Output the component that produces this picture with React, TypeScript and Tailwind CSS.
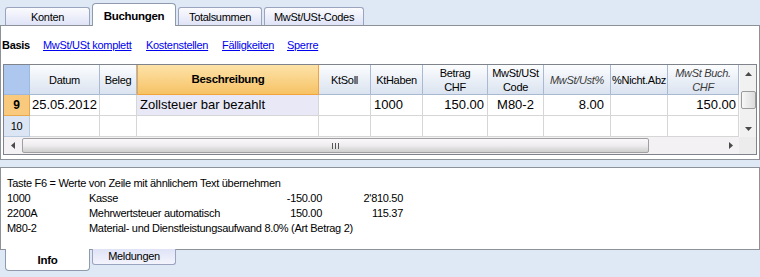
import React from "react";

const cols = [
  { key: "rh", w: 26 },
  { key: "Datum", w: 70 },
  { key: "Beleg", w: 37 },
  { key: "Beschreibung", w: 182 },
  { key: "KtSoll", w: 52 },
  { key: "KtHaben", w: 52 },
  { key: "Betrag", w: 65 },
  { key: "Code", w: 56 },
  { key: "Ust", w: 67 },
  { key: "Nicht", w: 57 },
  { key: "Buch", w: 71 },
];

function TopTab({ label, active, w }: { label: string; active?: boolean; w: number }) {
  if (active) {
    return (
      <div
        className="relative z-10 -mb-px h-[23px] bg-white border border-b-0 border-[#8f9aae] rounded-t-[4px] flex items-start justify-center pt-[4px] font-bold text-[11.5px]"
        style={{ width: w }}
      >
        {label}
      </div>
    );
  }
  return (
    <div
      className="h-[18px] border border-b-0 border-[#9aa4bf] rounded-t-[3px] bg-linear-to-b from-[#fbfbfe] to-[#dfe3f6] flex items-center justify-center pt-px"
      style={{ width: w }}
    >
      {label}
    </div>
  );
}

function UpArrow() {
  return (
    <svg width="7" height="4" viewBox="0 0 7 4">
      <path d="M3.5 0 L7 4 L0 4 Z" fill="#4a4a4a" />
    </svg>
  );
}
function DownArrow() {
  return (
    <svg width="7" height="4" viewBox="0 0 7 4">
      <path d="M0 0 L7 0 L3.5 4 Z" fill="#4a4a4a" />
    </svg>
  );
}
function LeftArrow() {
  return (
    <svg width="4" height="7" viewBox="0 0 4 7">
      <path d="M4 0 L4 7 L0 3.5 Z" fill="#4a4a4a" />
    </svg>
  );
}
function RightArrow() {
  return (
    <svg width="4" height="7" viewBox="0 0 4 7">
      <path d="M0 0 L4 3.5 L0 7 Z" fill="#4a4a4a" />
    </svg>
  );
}

const hdrCell =
  "h-[30px] shrink-0 border-r border-b border-[#a8bad2] bg-linear-to-b from-[#fcfdfe] to-[#dae3f0] flex items-center justify-center text-center leading-[14px] overflow-hidden whitespace-nowrap";
const bodyCell =
  "h-[21px] shrink-0 border-r border-b border-[#d6d6d6] flex items-center overflow-hidden whitespace-nowrap text-[13px] tracking-normal";

export default function App() {
  return (
    <div className="w-[760px] h-[277px] bg-[#dfe9f5] flex flex-col overflow-hidden text-black text-[11px] tracking-[-0.3px] font-['Liberation_Sans',Arial,sans-serif]">
      {/* top tabs */}
      <div className="h-[25px] flex items-end pl-[5px] gap-[2px] shrink-0">
        <TopTab label="Konten" w={85} />
        <TopTab label="Buchungen" w={84} active />
        <TopTab label="Totalsummen" w={84} />
        <TopTab label="MwSt/USt-Codes" w={100} />
      </div>

      {/* main panel */}
      <div className="h-[135px] shrink-0 bg-white border border-[#8d9299] flex flex-col">
        <div className="mt-[11px] h-[16px] flex items-center pl-[1px]">
          <span className="w-[41px] font-bold">Basis</span>
          <span className="w-[103px]"><span className="text-[#0000f0] underline">MwSt/USt komplett</span></span>
          <span className="w-[76px]"><span className="text-[#0000f0] underline">Kostenstellen</span></span>
          <span className="w-[65px]"><span className="text-[#0000f0] underline">Fälligkeiten</span></span>
          <span><span className="text-[#0000f0] underline">Sperre</span></span>
        </div>

        {/* grid */}
        <div className="mt-[11px] ml-[2px] w-[754px] h-[91px] border border-[#7f848c] flex flex-col">
          <div className="flex h-[72px]">
            <div className="w-[735px] flex flex-col">
              {/* header */}
              <div className="flex">
                <div className="w-[26px] h-[30px] shrink-0 border-r border-b border-[#9fb8dc] bg-[#adc7ee]" />
                <div className={hdrCell} style={{ width: 70 }}>Datum</div>
                <div className={hdrCell} style={{ width: 37 }}>Beleg</div>
                <div
                  className="h-[30px] shrink-0 border-x border-b border-[#f3a33c] bg-linear-to-b from-[#fde3a8] to-[#f6c264] flex items-center justify-center font-bold text-[11.5px]"
                  style={{ width: 182 }}
                >
                  Beschreibung
                </div>
                <div className={hdrCell} style={{ width: 52 }}>KtSoll</div>
                <div className={hdrCell} style={{ width: 52 }}>KtHaben</div>
                <div className={hdrCell} style={{ width: 65 }}>
                  Betrag<br />CHF
                </div>
                <div className={hdrCell} style={{ width: 56 }}>
                  MwSt/USt<br />Code
                </div>
                <div className={hdrCell + " italic text-[#3a3a3a]"} style={{ width: 67 }}>MwSt/Ust%</div>
                <div className={hdrCell} style={{ width: 57 }}>%Nicht.Abz</div>
                <div className={hdrCell + " italic text-[#3a3a3a]"} style={{ width: 71 }}>
                  MwSt Buch.<br />CHF
                </div>
              </div>
              {/* row 9 */}
              <div className="flex">
                <div className="w-[26px] h-[21px] shrink-0 border-r border-b border-[#e8a94e] bg-[#f9ca7d] flex items-center justify-center font-bold text-[12px]">9</div>
                <div className={bodyCell + " pl-[2px]"} style={{ width: 70 }}>25.05.2012</div>
                <div className={bodyCell} style={{ width: 37 }} />
                <div className={bodyCell + " pl-[3px] bg-[#e8e8f6]"} style={{ width: 182 }}>Zollsteuer bar bezahlt</div>
                <div className={bodyCell} style={{ width: 52 }} />
                <div className={bodyCell + " pl-[3px]"} style={{ width: 52 }}>1000</div>
                <div className={bodyCell + " justify-end pr-[3px]"} style={{ width: 65 }}>150.00</div>
                <div className={bodyCell + " justify-center"} style={{ width: 56 }}>M80-2</div>
                <div className={bodyCell + " justify-end pr-[6px]"} style={{ width: 67 }}>8.00</div>
                <div className={bodyCell} style={{ width: 57 }} />
                <div className={bodyCell + " justify-end pr-[2px]"} style={{ width: 71 }}>150.00</div>
              </div>
              {/* row 10 */}
              <div className="flex">
                <div className="w-[26px] h-[21px] shrink-0 border-r border-b border-[#b9c9df] bg-[#dbe5f3] flex items-center justify-center text-[11px]">10</div>
                {cols.slice(1).map((c) => (
                  <div key={c.key} className={bodyCell} style={{ width: c.w }} />
                ))}
              </div>
            </div>
            {/* vertical scrollbar */}
            <div className="w-[17px] h-[72px] bg-[#f1f1f1] border-l border-[#fafafa] flex flex-col items-center">
              <div className="h-[17px] w-full flex items-center justify-center"><UpArrow /></div>
              <div className="mt-[9px] w-[15px] h-[18px] rounded-[2px] border border-[#9b9b9b] bg-linear-to-r from-[#f7f7f7] to-[#dcdcdc]" />
              <div className="flex-1" />
              <div className="h-[17px] w-full flex items-center justify-center"><DownArrow /></div>
            </div>
          </div>
          {/* horizontal scrollbar */}
          <div className="flex h-[17px]">
            <div className="w-[735px] h-[17px] bg-[#f3f1f3] flex items-center">
              <div className="w-[17px] h-[17px] flex items-center justify-center"><LeftArrow /></div>
              <div className="ml-px w-[627px] h-[15px] rounded-[2px] border border-[#a0a0a0] bg-linear-to-b from-[#fbf8fb] via-[#eeecee] to-[#cfcfcf] flex items-center justify-center">
                <div className="flex gap-[2px]">
                  <div className="w-px h-[6px] bg-[#555]" />
                  <div className="w-px h-[6px] bg-[#555]" />
                  <div className="w-px h-[6px] bg-[#555]" />
                </div>
              </div>
              <div className="flex-1" />
              <div className="w-[17px] h-[17px] flex items-center justify-center"><RightArrow /></div>
            </div>
            <div className="w-[17px] h-[17px] bg-[#ececec]" />
          </div>
        </div>
      </div>

      {/* info panel */}
      <div className="mt-[7px] h-[83px] shrink-0 bg-white border border-[#8d9299] pl-[6px] pt-[8px] leading-[15px]">
        <div className="whitespace-nowrap">Taste F6 = Werte von Zeile mit ähnlichem Text übernehmen</div>
        <div className="flex whitespace-nowrap">
          <span className="w-[82px]">1000</span>
          <span className="w-[173px]">Kasse</span>
          <span className="w-[60px] text-right">-150.00</span>
          <span className="w-[81px] text-right">2'810.50</span>
        </div>
        <div className="flex whitespace-nowrap">
          <span className="w-[82px]">2200A</span>
          <span className="w-[173px]">Mehrwertsteuer automatisch</span>
          <span className="w-[60px] text-right">150.00</span>
          <span className="w-[81px] text-right">115.37</span>
        </div>
        <div className="flex whitespace-nowrap">
          <span className="w-[82px]">M80-2</span>
          <span>Material- und Dienstleistungsaufwand 8.0% (Art Betrag 2)</span>
        </div>
      </div>

      {/* bottom tabs */}
      <div className="flex items-start pl-[5px] gap-[2px]">
        <div className="relative z-10 -mt-px w-[85px] h-[22px] bg-white border border-t-0 border-[#8f9aae] rounded-b-[4px] flex items-center justify-center font-bold text-[11.5px] pt-[2px]">
          Info
        </div>
        <div className="-mt-px w-[84px] h-[16px] border border-t-0 border-[#9aa4bf] rounded-b-[3px] bg-linear-to-b from-[#dfe3f6] to-[#f3f4fc] flex items-center justify-center">
          Meldungen
        </div>
      </div>
    </div>
  );
}
